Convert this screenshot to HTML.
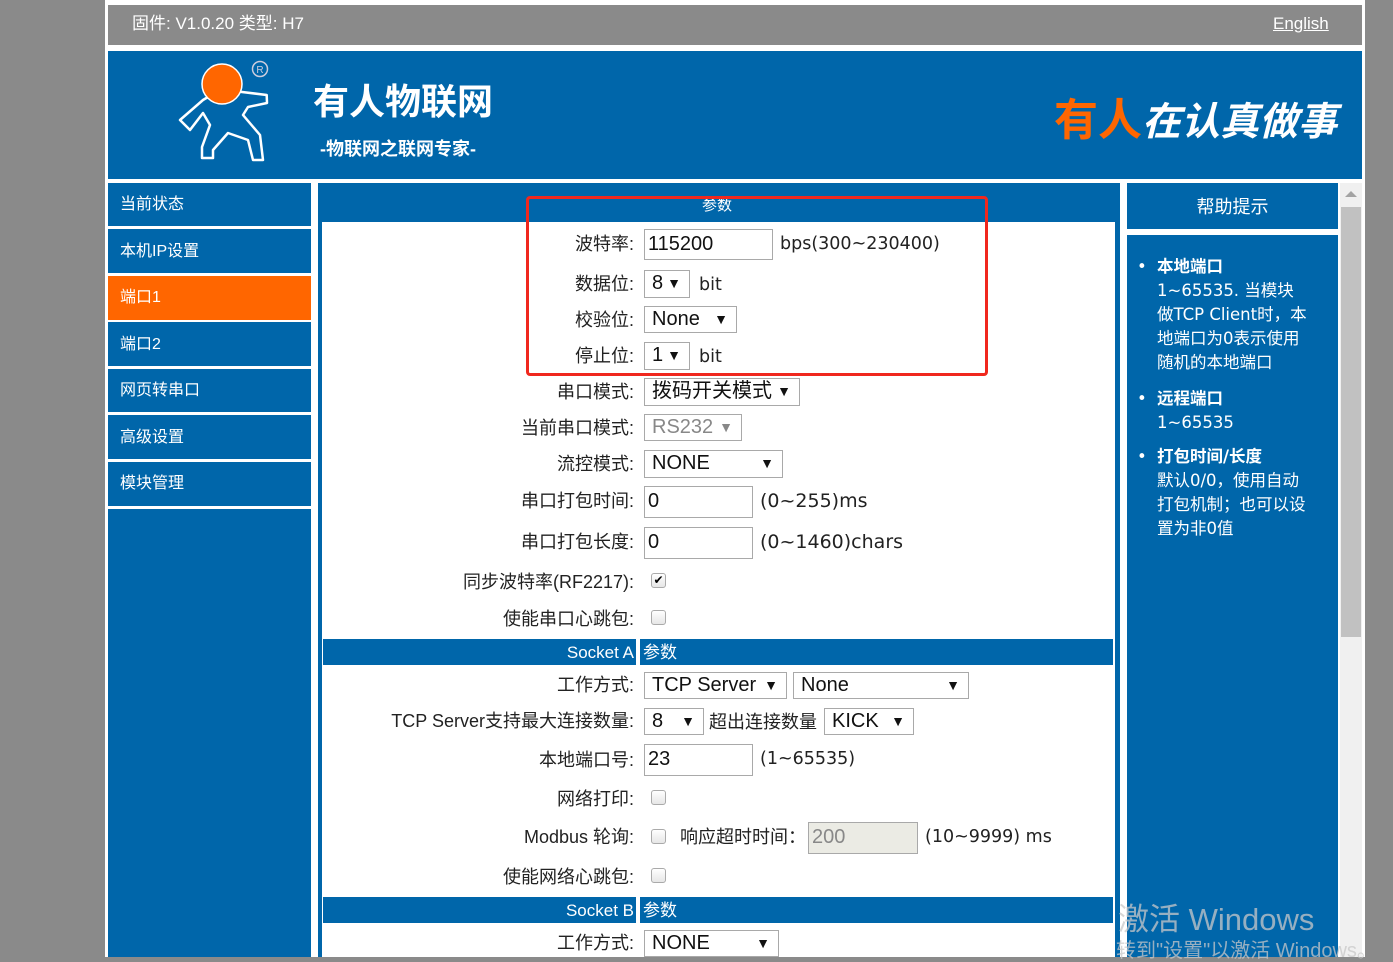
<!DOCTYPE html>
<html><head><meta charset="utf-8"><style>
*{margin:0;padding:0;box-sizing:border-box}
body{width:1393px;height:957px;overflow:hidden;background:#8a8a8a;position:relative;font-family:"Liberation Sans","Noto Sans CJK SC",sans-serif;}
.a{position:absolute}
.l{position:absolute;right:759px;font-size:18px;color:#222;white-space:nowrap;line-height:22px}
.t{position:absolute;font-size:18px;color:#222;white-space:nowrap;line-height:22px}
.d{font-family:"DejaVu Sans","Noto Sans CJK SC",sans-serif;font-size:17.5px}
.b{position:absolute;border:1px solid #a9a9a9;background:#fff;font-size:20px;color:#111;padding-left:7px;line-height:25px;white-space:nowrap}
.b .ar{position:absolute;right:8px;top:0;font-size:14px}
.in{padding-left:3px;line-height:28px}
.cb{position:absolute;width:15px;height:15px;border:1px solid #aaa;border-radius:3px;background:linear-gradient(#fff,#e6e6e6)}
.nav{position:absolute;left:108px;width:203px;background:#0066aa;color:#fff;font-size:16px;padding-left:12px}
.bar{position:absolute;height:26px;background:#0066aa;color:#fff;font-size:17px;line-height:28px}
.h{font-family:"DejaVu Sans","Noto Sans CJK SC",sans-serif;font-size:16.5px;white-space:nowrap}
</style></head><body>
<div class="a" style="left:105px;top:0;width:1260px;height:957px;background:#fff"></div>
<div class="a" style="left:108px;top:5px;width:1254px;height:40px;background:#8a8a8a"></div>
<div class="t" style="left:132px;top:13px;color:#fff;font-size:17px">固件: V1.0.20 类型: H7</div>
<div class="t" style="left:1273px;top:13px;color:#fff;font-size:17px;text-decoration:underline">English</div>
<div class="a" style="left:108px;top:51px;width:1254px;height:128px;background:#0066aa"></div>
<svg class="a" style="left:170px;top:55px" width="110" height="115" viewBox="170 55 110 115">
<path d="M240 91.7 L266.7 95 L267 103 L248 107 L243 115 L260 135 L263 160 L253 160 L248 140 L228 133 L213 150 L213 158 L202 158 L202 147 L210 125 L203 113 L190 130 L180 120 L203 100 L208 97" fill="none" stroke="#fff" stroke-width="2.5" stroke-linejoin="round"/>
<circle cx="222" cy="84" r="20" fill="#ff6600" stroke="#fff" stroke-width="1.5"/>
<circle cx="260" cy="69" r="7.5" fill="none" stroke="#ccd" stroke-width="1.5"/>
<text x="260" y="73" font-size="10" fill="#ccd" text-anchor="middle" font-family="Liberation Sans">R</text>
</svg>
<div class="t" style="left:313px;top:80px;color:#fff;font-size:36px;line-height:44px;font-weight:bold">有人物联网</div>
<div class="t" style="left:320px;top:138px;color:#fff;font-size:18px;font-weight:bold">-物联网之联网专家-</div>
<div class="t" style="left:1054px;top:96px;color:#ff6600;font-size:44px;line-height:50px;font-weight:bold">有人<span style="color:#fff;font-style:italic;font-size:39px">在认真做事</span></div>

<div class="nav" style="top:183px;height:43px;line-height:44px">当前状态</div>
<div class="nav" style="top:229px;height:44px;line-height:46px">本机IP设置</div>
<div class="nav" style="top:276px;height:44px;line-height:44px;background:#ff6600">端口1</div>
<div class="nav" style="top:322px;height:44px;line-height:46px">端口2</div>
<div class="nav" style="top:369px;height:43px;line-height:44px">网页转串口</div>
<div class="nav" style="top:415px;height:44px;line-height:46px">高级设置</div>
<div class="nav" style="top:462px;height:44px;line-height:44px">模块管理</div>
<div class="nav" style="top:509px;height:448px"></div>

<div class="a" style="left:318px;top:183px;width:802px;height:774px;background:#0066aa"></div>
<div class="a" style="left:322px;top:222px;width:793px;height:735px;background:#fff"></div>
<div class="t" style="left:702px;top:195px;color:#fff;font-size:15px">参数</div>

<div class="l" style="top:233px">波特率:</div>
<div class="b in" style="left:644px;top:229px;width:129px;height:31px">115200</div>
<div class="t d" style="left:780px;top:233px">bps(300~230400)</div>
<div class="l" style="top:273px">数据位:</div>
<div class="b" style="left:644px;top:270px;width:46px;height:28px">8<span class="ar">▼</span></div>
<div class="t d" style="left:699px;top:274px">bit</div>
<div class="l" style="top:309px">校验位:</div>
<div class="b" style="left:644px;top:306px;width:93px;height:27px">None<span class="ar">▼</span></div>
<div class="l" style="top:345px">停止位:</div>
<div class="b" style="left:644px;top:342px;width:46px;height:28px">1<span class="ar">▼</span></div>
<div class="t d" style="left:699px;top:346px">bit</div>
<div class="a" style="left:526px;top:196px;width:462px;height:180px;border:3px solid #f0281e;border-radius:4px"></div>

<div class="l" style="top:381px">串口模式:</div>
<div class="b" style="left:644px;top:378px;width:156px;height:28px">拨码开关模式<span class="ar">▼</span></div>
<div class="l" style="top:417px">当前串口模式:</div>
<div class="b" style="left:644px;top:414px;width:98px;height:27px;color:#888">RS232<span class="ar">▼</span></div>
<div class="l" style="top:453px">流控模式:</div>
<div class="b" style="left:644px;top:450px;width:139px;height:28px">NONE<span class="ar">▼</span></div>
<div class="l" style="top:490px">串口打包时间:</div>
<div class="b in" style="left:644px;top:486px;width:109px;height:32px">0</div>
<div class="t d" style="left:760px;top:490px;font-size:19px">(0~255)ms</div>
<div class="l" style="top:531px">串口打包长度:</div>
<div class="b in" style="left:644px;top:527px;width:109px;height:32px">0</div>
<div class="t d" style="left:760px;top:531px;font-size:19px">(0~1460)chars</div>
<div class="l" style="top:571px">同步波特率(RF2217):</div>
<div class="cb" style="left:651px;top:573px;font-size:12px;line-height:13px;text-align:center">✔</div>
<div class="l" style="top:608px">使能串口心跳包:</div>
<div class="cb" style="left:651px;top:610px"></div>

<div class="bar" style="left:323px;top:639px;width:313px;text-align:right;padding-right:2px">Socket A</div>
<div class="bar" style="left:640px;top:639px;width:473px;padding-left:3px">参数</div>
<div class="l" style="top:674px">工作方式:</div>
<div class="b" style="left:644px;top:672px;width:143px;height:27px">TCP Server<span class="ar">▼</span></div>
<div class="b" style="left:793px;top:672px;width:176px;height:27px">None<span class="ar">▼</span></div>
<div class="l" style="top:710px">TCP Server支持最大连接数量:</div>
<div class="b" style="left:644px;top:708px;width:60px;height:27px">8<span class="ar">▼</span></div>
<div class="t" style="left:709px;top:711px">超出连接数量</div>
<div class="b" style="left:824px;top:708px;width:90px;height:27px">KICK<span class="ar">▼</span></div>
<div class="l" style="top:749px">本地端口号:</div>
<div class="b in" style="left:644px;top:744px;width:109px;height:32px">23</div>
<div class="t d" style="left:760px;top:748px">(1~65535)</div>
<div class="l" style="top:788px">网络打印:</div>
<div class="cb" style="left:651px;top:790px"></div>
<div class="l" style="top:826px">Modbus 轮询:</div>
<div class="cb" style="left:651px;top:829px"></div>
<div class="t" style="left:680px;top:826px">响应超时时间：</div>
<div class="b in" style="left:808px;top:822px;width:110px;height:32px;background:#ebebe4;color:#888">200</div>
<div class="t d" style="left:925px;top:826px">(10~9999) ms</div>
<div class="l" style="top:866px">使能网络心跳包:</div>
<div class="cb" style="left:651px;top:868px"></div>
<div class="bar" style="left:323px;top:897px;width:313px;text-align:right;padding-right:2px">Socket B</div>
<div class="bar" style="left:640px;top:897px;width:473px;padding-left:3px">参数</div>
<div class="l" style="top:932px">工作方式:</div>
<div class="b" style="left:644px;top:930px;width:135px;height:27px">NONE<span class="ar">▼</span></div>

<div class="a" style="left:1127px;top:183px;width:211px;height:46px;background:#0066aa;color:#fff;font-size:18px;line-height:48px;text-align:center">帮助提示</div>
<div class="a h" style="left:1127px;top:235px;width:211px;height:722px;background:#0066aa;color:#fff;line-height:24px">
<div class="a" style="left:10px;top:20px">•</div>
<div class="a" style="left:30px;top:20px"><b>本地端口</b><br>1~65535. 当模块<br>做TCP Client时，本<br>地端口为0表示使用<br>随机的本地端口</div>
<div class="a" style="left:10px;top:152px">•</div>
<div class="a" style="left:30px;top:152px"><b>远程端口</b><br>1~65535</div>
<div class="a" style="left:10px;top:210px">•</div>
<div class="a" style="left:30px;top:210px"><b>打包时间/长度</b><br>默认0/0，使用自动<br>打包机制；也可以设<br>置为非0值</div>
</div>
<div class="a" style="left:1340px;top:183px;width:22px;height:774px;background:#f0f0f0"></div>
<div class="a" style="left:1341px;top:207px;width:20px;height:430px;background:#c1c1c1"></div>
<div class="a" style="left:1345px;top:191px;width:0;height:0;border-left:6px solid transparent;border-right:6px solid transparent;border-bottom:6px solid #a3a3a3"></div>
<div class="t" style="left:1118px;top:902px;color:rgba(200,200,200,.75);font-size:31px;line-height:36px">激活 Windows</div>
<div class="t" style="left:1116px;top:940px;color:rgba(200,200,200,.75);font-size:20px">转到"设置"以激活 Windows。</div>
</body></html>
